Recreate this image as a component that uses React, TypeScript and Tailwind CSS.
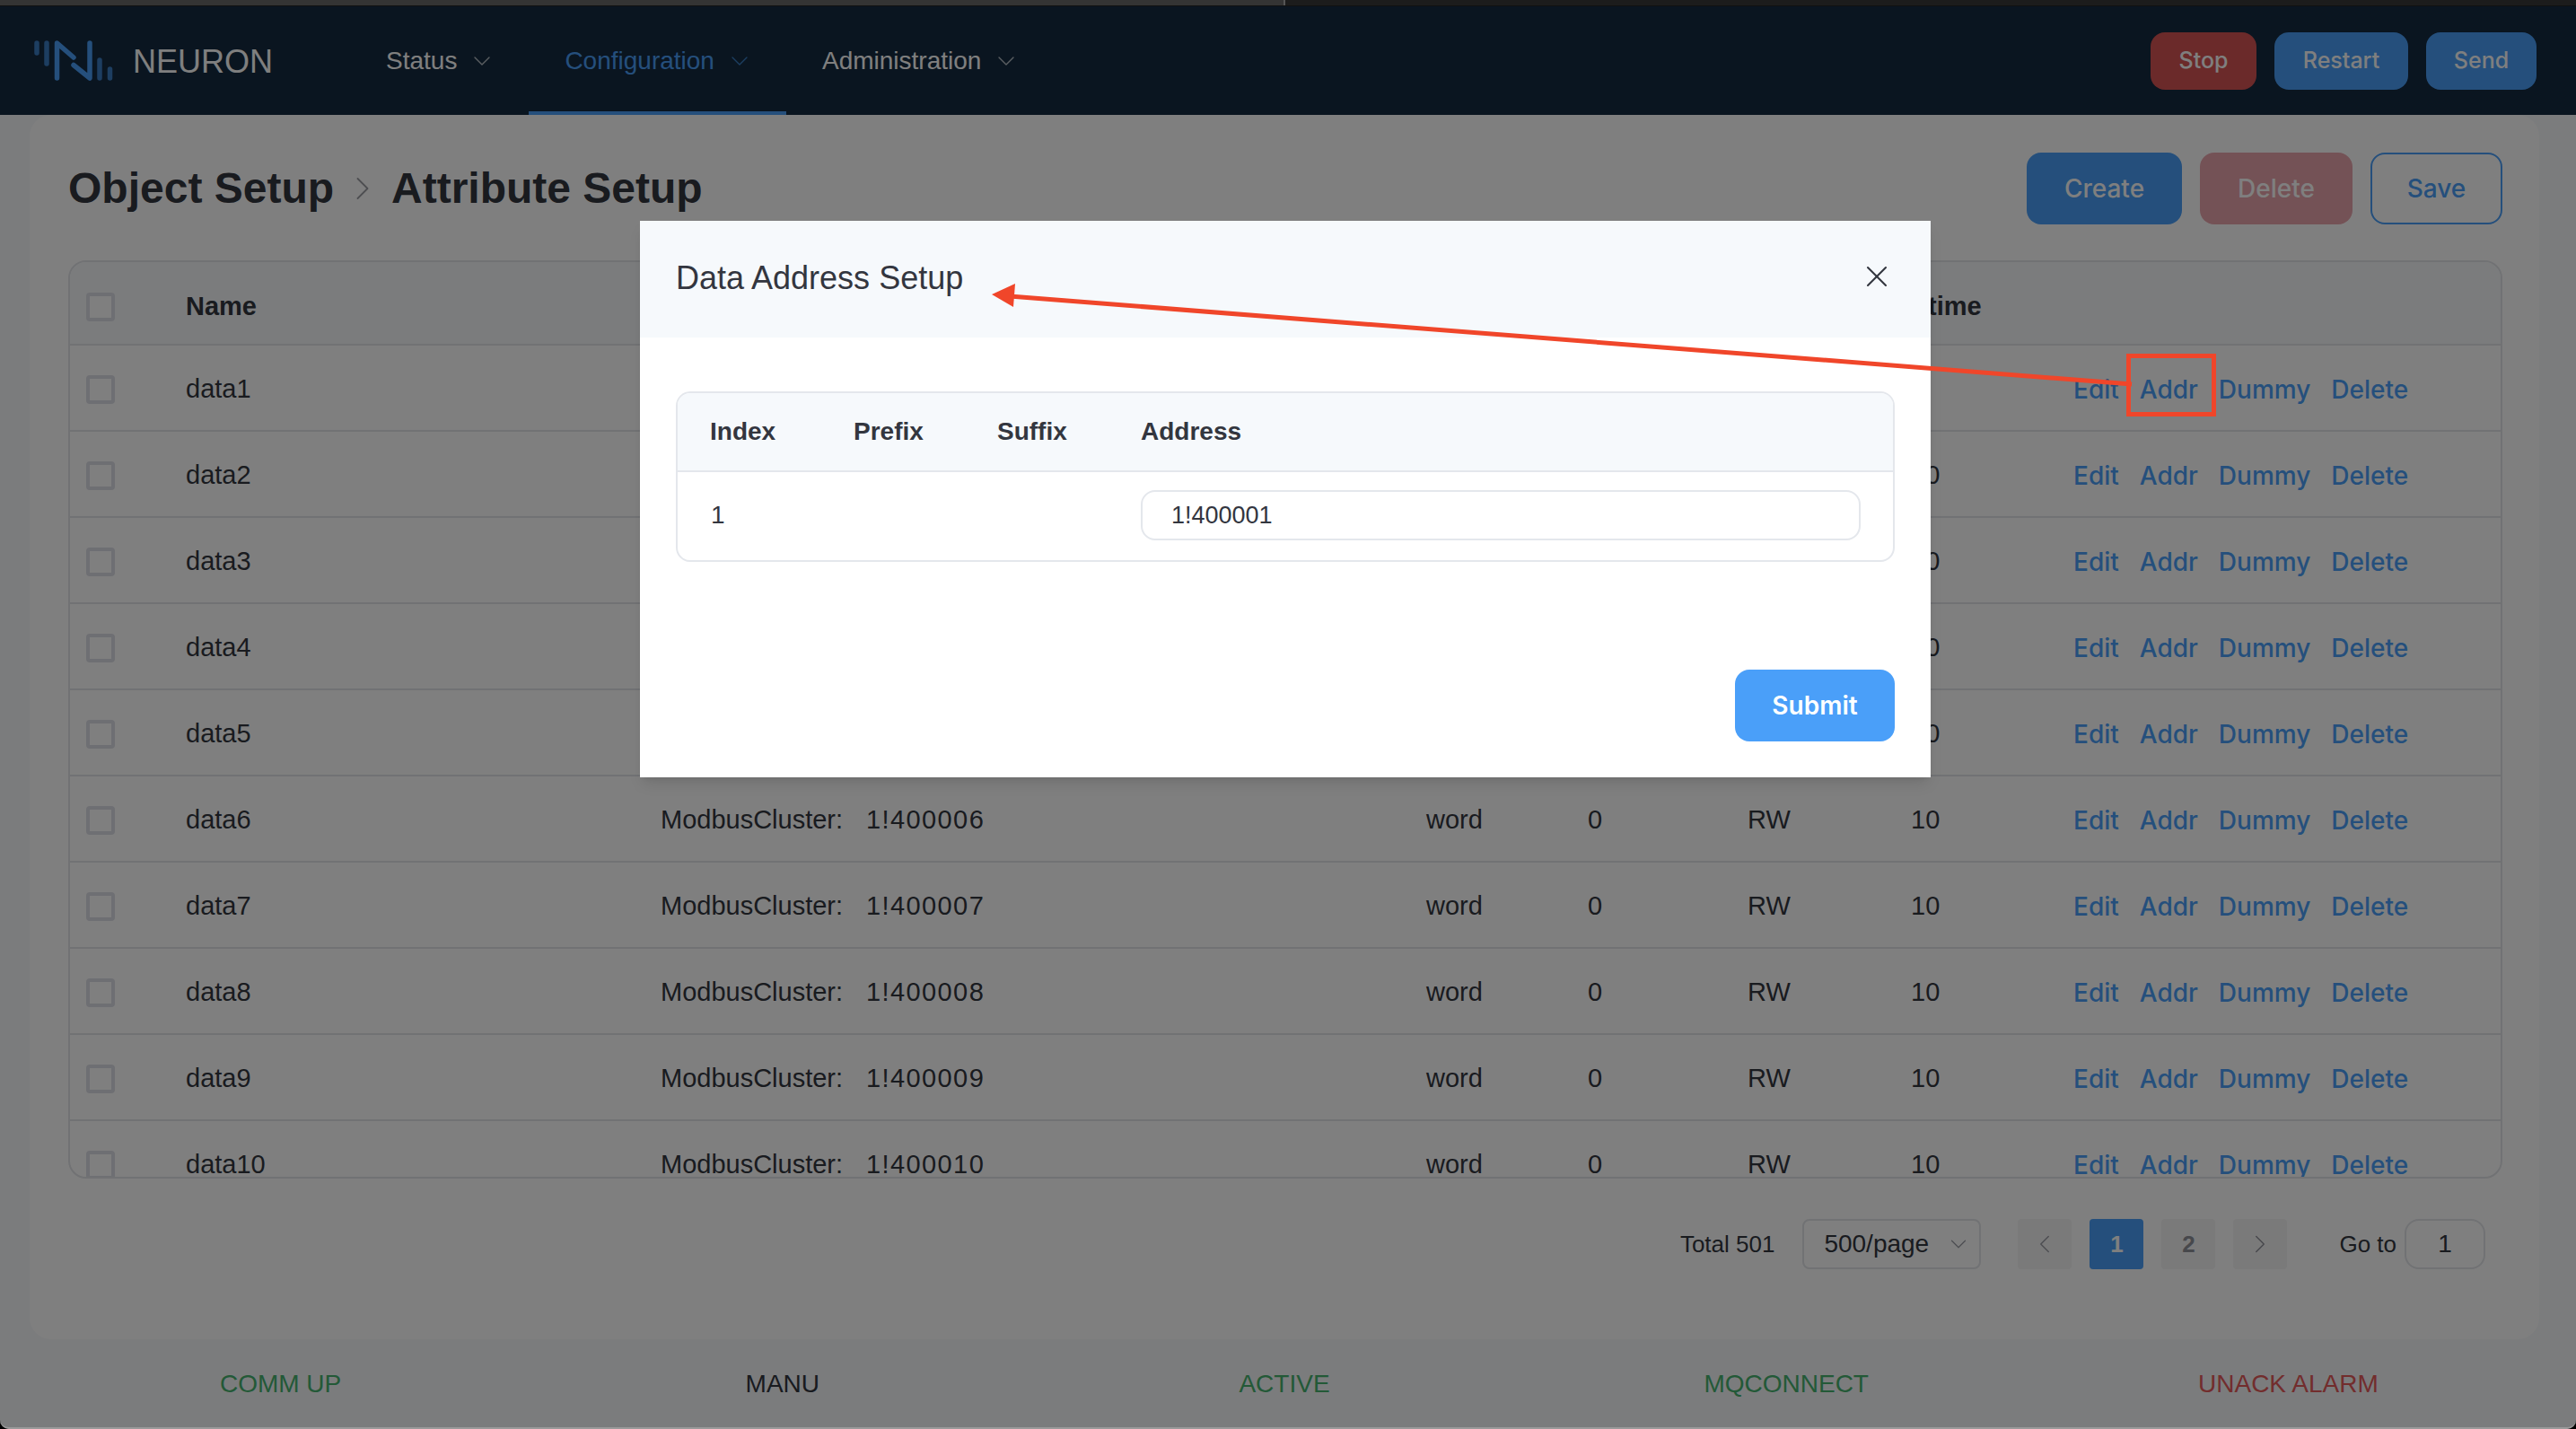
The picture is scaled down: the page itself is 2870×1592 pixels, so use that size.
import { ChevronDown, ChevronLeft, ChevronRight, X } from 'lucide-react'

const ROWS = [1, 2, 3, 4, 5, 6, 7, 8, 9, 10]
const STATUS = [
  { label: 'COMM UP', color: 'text-[#46b36f]' },
  { label: 'MANU', color: 'text-[#33363f]' },
  { label: 'ACTIVE', color: 'text-[#46b36f]' },
  { label: 'MQCONNECT', color: 'text-[#46b36f]' },
  { label: 'UNACK ALARM', color: 'text-[#e45b5b]' },
]

function Logo() {
  return (
    <svg width="90" height="48" viewBox="0 0 90 48" fill="none" strokeLinecap="round" strokeWidth="5.5">
      <path d="M3 4v11M14 4v23M73 23v20M84.5 33v10" stroke="#3a7cc2" />
      <path d="M25.5 43V4l18.5 16M44 28.5L62 43V4" stroke="#4a9ff9" strokeLinejoin="round" />
    </svg>
  )
}

function NavItem({ label, active }: { label: string; active?: boolean }) {
  return (
    <div
      className={`flex h-full items-center pl-[40px] pr-[36px] text-[28px] border-b-4 pt-[4px] ${
        active ? 'border-[#4a9ff9] text-[#4a9ff9]' : 'border-transparent text-white'
      }`}
    >
      {label}
      <ChevronDown size={32} strokeWidth={1} className="ml-[12px] opacity-70" />
    </div>
  )
}

function Checkbox() {
  return <div className="h-[32px] w-[32px] rounded-[4px] border-4 border-[#dcdee6] bg-white" />
}

function Row({ n }: { n: number }) {
  return (
    <div className="grid h-[96px] shrink-0 grid-cols-[129px_529px_229px_624px_180px_178px_182px_181px_1fr] items-center border-b-2 border-[#e2e4e8] pt-[3px] text-[29px]">
      <div className="pl-[18px]">
        <Checkbox />
      </div>
      <div>data{n}</div>
      <div>ModbusCluster:</div>
      <div className="tracking-[1.4px]">1!{400000 + n}</div>
      <div>word</div>
      <div>0</div>
      <div>RW</div>
      <div>{n === 1 ? '1' : '10'}</div>
      <div className="flex gap-[23px] font-['Inter',sans-serif] text-[28px] font-medium text-[#4a9ff9]">
        <span>Edit</span>
        <span>Addr</span>
        <span>Dummy</span>
        <span>Delete</span>
      </div>
    </div>
  )
}

export default function App() {
  return (
    <div className="relative flex h-[1592px] w-[2870px] flex-col overflow-hidden bg-[#f6f8fb] font-['Liberation_Sans',sans-serif] text-[28px] text-[#33363f]">
      {/* window strip */}
      <div className="flex h-[7px] shrink-0 border-b border-[#111]">
        <div className="w-[1432px] border-r-2 border-[#555] bg-[#343434]" />
        <div className="flex-1 bg-[#1c1c1c]" />
      </div>

      {/* Header */}
      <div className="flex h-[121px] shrink-0 items-center bg-[#142a40] pl-[38px] pr-[44px]">
        <div className="flex w-[352px] items-center">
          <Logo />
          <span className="ml-[20px] pt-[2px] text-[36px] text-white">NEURON</span>
        </div>
        <div className="flex h-full flex-1">
          <NavItem label="Status" />
          <NavItem label="Configuration" active />
          <NavItem label="Administration" />
        </div>
        <div className="flex gap-[20px] font-['Inter',sans-serif] text-[25px] font-medium text-white">
          <button className="h-[64px] w-[118px] rounded-[16px] bg-[#d65454]">Stop</button>
          <button className="h-[64px] w-[149px] rounded-[16px] bg-[#4a9ff9]">Restart</button>
          <button className="h-[64px] w-[123px] rounded-[16px] bg-[#4a9ff9]">Send</button>
        </div>
      </div>

      {/* Main card */}
      <div className="ml-[33px] flex h-[1364px] w-[2796px] shrink-0 flex-col rounded-[24px] bg-white pl-[43px] pr-[41px] pt-[42px]">
        <div className="flex h-[80px] shrink-0 items-center justify-between">
          <div className="flex items-center text-[48px] font-bold">
            <span>Object Setup</span>
            <ChevronRight size={44} strokeWidth={1} className="mx-[10px] text-[#9a9ca3]" />
            <span>Attribute Setup</span>
          </div>
          <div className="flex gap-[20px] font-['Inter',sans-serif] text-[28px] font-medium">
            <button className="h-[80px] w-[173px] rounded-[16px] bg-[#4a9ff9] text-white">Create</button>
            <button className="h-[80px] w-[170px] rounded-[16px] bg-[#e8a4ac] text-white">Delete</button>
            <button className="h-[80px] w-[147px] rounded-[16px] border-2 border-[#4a9ff9] text-[#4a9ff9]">Save</button>
          </div>
        </div>

        {/* Table */}
        <div className="mt-[40px] flex h-[1023px] shrink-0 flex-col overflow-hidden rounded-[20px] border-2 border-[#e2e4e8]">
          <div className="flex h-[93px] shrink-0 items-center border-b-2 border-[#e2e4e8] bg-[#f6f8fb] pt-[9px] text-[29px] font-bold">
            <div className="w-[129px] pl-[18px]">
              <Checkbox />
            </div>
            <div className="w-[1941px]">Name</div>
            <div>time</div>
          </div>
          {ROWS.map((n) => (
            <Row key={n} n={n} />
          ))}
        </div>

        {/* Pagination */}
        <div className="mt-[45px] flex h-[56px] shrink-0 items-center justify-end pr-[19px] text-[26px]">
          <span>Total 501</span>
          <div className="ml-[31px] flex h-[56px] w-[199px] items-center justify-between rounded-[8px] border-2 border-[#e2e4e8] pl-[22px] pr-[8px] text-[28px]">
            500/page
            <ChevronDown size={30} strokeWidth={1} className="text-[#9a9ca3]" />
          </div>
          <div className="ml-[41px] flex h-[56px] w-[60px] items-center justify-center rounded-[4px] bg-[#f4f4f5] text-[#9a9ca3]">
            <ChevronLeft size={34} strokeWidth={1} />
          </div>
          <div className="ml-[20px] flex h-[56px] w-[60px] items-center justify-center rounded-[4px] bg-[#4a9ff9] font-bold text-white">1</div>
          <div className="ml-[20px] flex h-[56px] w-[60px] items-center justify-center rounded-[4px] bg-[#f4f4f5] font-bold text-[#8f9199]">2</div>
          <div className="ml-[20px] flex h-[56px] w-[60px] items-center justify-center rounded-[4px] bg-[#f4f4f5] text-[#8f9199]">
            <ChevronRight size={34} strokeWidth={1} />
          </div>
          <span className="ml-[58px]">Go to</span>
          <div className="ml-[9px] flex h-[56px] w-[90px] items-center justify-center rounded-[16px] border-2 border-[#e2e4e8] text-[28px]">1</div>
        </div>
      </div>

      {/* Status bar */}
      <div className="ml-[33px] grid h-[100px] w-[2796px] shrink-0 grid-cols-5 items-center text-center">
        {STATUS.map((s) => (
          <div key={s.label} className={s.color}>
            {s.label}
          </div>
        ))}
      </div>

      {/* Overlay */}
      <div className="absolute inset-x-0 bottom-0 top-[7px] bg-black/50" />

      {/* Window corners */}
      <div className="absolute inset-x-0 bottom-0 h-[30px] overflow-hidden">
        <div className="absolute inset-x-0 bottom-0 h-[60px] rounded-b-[10px] border-b-2 border-[#9a9a9a] shadow-[0_0_0_20px_#000]" />
      </div>

      {/* Dialog */}
      <div className="absolute left-[713px] top-[246px] flex h-[620px] w-[1438px] flex-col bg-white shadow-lg">
        <div className="flex h-[130px] shrink-0 items-center justify-between bg-[#f6f9fc] pb-[2px] pl-[40px] pr-[40px]">
          <span className="text-[36px]">Data Address Setup</span>
          <X size={40} strokeWidth={1.25} className="mb-[4px]" />
        </div>
        <div className="flex flex-1 flex-col px-[40px] pt-[60px]">
          <div className="h-[190px] overflow-hidden rounded-[16px] border-2 border-[#e4e7ec]">
            <div className="flex h-[88px] items-center border-b-2 border-[#e4e7ec] bg-[#f6f9fc] pl-[36px] font-bold">
              <div className="w-[160px]">Index</div>
              <div className="w-[160px]">Prefix</div>
              <div className="w-[160px]">Suffix</div>
              <div>Address</div>
            </div>
            <div className="flex h-[96px] items-center pl-[37px]">
              <div className="w-[479px]">1</div>
              <div className="flex h-[56px] w-[802px] items-center rounded-[16px] border-2 border-[#e4e7ec] pl-[32px] text-[27px]">1!400001</div>
            </div>
          </div>
          <div className="mt-[120px] flex justify-end">
            <button className="h-[80px] w-[178px] rounded-[16px] bg-[#4a9ff9] font-['Inter',sans-serif] text-[28px] font-semibold text-white">Submit</button>
          </div>
        </div>
      </div>

      {/* Annotation */}
      <svg className="pointer-events-none absolute inset-0" width="2870" height="1592" viewBox="0 0 2870 1592" fill="none">
        <path d="M2375 428L1125 330" stroke="#f0462a" strokeWidth="5" />
        <path d="M1105 328L1131 316L1129 342Z" fill="#f0462a" />
        <rect x="2371.5" y="396.5" width="95" height="65" stroke="#f0462a" strokeWidth="5" />
      </svg>
    </div>
  )
}
